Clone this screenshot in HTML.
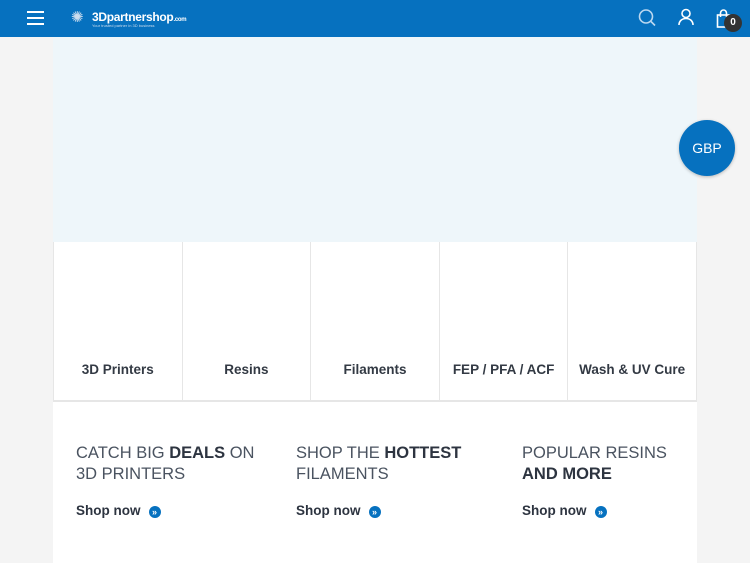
<!DOCTYPE html><html><head><style>
body{margin:0;width:750px;height:563px;background:#f4f4f4;font-family:"Liberation Sans",sans-serif;position:relative;overflow:hidden}
.hdr{position:absolute;left:0;top:0;width:750px;height:37px;background:#0671bf}
.hero{position:absolute;left:53px;top:37px;width:644px;height:205px;background:#eef6fa}
.cats{position:absolute;left:53px;top:242px;width:644px;height:160px;background:#fff;display:flex;border-bottom:2px solid #e6e6e6;box-sizing:border-box}
.cat{flex:1;border-left:1px solid #e6e6e6;text-align:center;padding-top:120px;font-weight:bold;font-size:13.5px;color:#333a44;box-sizing:border-box}
.promo{position:absolute;left:53px;top:402px;width:644px;height:161px;background:#fff}
.p{position:absolute;top:41px;font-size:16.5px;line-height:21px;color:#4a5360;white-space:nowrap}
.p b{color:#2d3440}
.s{position:absolute;top:101px;font-weight:bold;font-size:13.5px;color:#2d3440}
.s i{display:inline-block;width:12px;height:12px;border-radius:50%;background:#0671bf;color:#fff;font-style:normal;font-size:9px;line-height:12px;text-align:center;margin-left:8px;vertical-align:0}
.gbp{position:absolute;left:679px;top:120px;width:56px;height:56px;border-radius:50%;background:#0671bf;color:#fff;font-size:14px;text-align:center;line-height:57px;box-shadow:0 1px 3px rgba(0,0,0,.25)}
</style></head><body>
<div class="hdr">
<div style="position:absolute;left:27px;top:11px;width:17px;height:2px;background:#fff;box-shadow:0 6px 0 #fff,0 12px 0 #fff"></div>
<div style="position:absolute;left:71px;top:11px;width:14px;height:14px;color:#cde;font-size:15px;line-height:14px">✺</div>
<div style="position:absolute;left:92px;top:10px;color:#fff;font-weight:bold;font-size:12px;letter-spacing:-.3px">3Dpartnershop<span style="font-size:6px">.com</span></div>
<div style="position:absolute;left:92px;top:23px;color:#cde;font-size:4px">Your trusted partner in 3D business</div>
<svg style="position:absolute;left:637px;top:8px" width="20" height="20" fill="none" stroke="#bcd8f0" stroke-width="1.6"><circle cx="9" cy="8.5" r="6.5"/><path d="M14 13.5l4 4"/></svg>
<svg style="position:absolute;left:677px;top:8px" width="18" height="18" fill="none" stroke="#fff" stroke-width="1.6"><circle cx="9" cy="5.5" r="4"/><path d="M2 17c0-4 3-6.5 7-6.5s7 2.5 7 6.5"/></svg>
<svg style="position:absolute;left:716px;top:9px" width="16" height="20" fill="none" stroke="#fff" stroke-width="1.6"><rect x="1.5" y="6" width="12" height="12"/><path d="M4.5 8V4a3 3 0 016 0v4"/></svg>
<div style="position:absolute;left:724px;top:14px;width:18px;height:18px;border-radius:50%;background:#333;color:#fff;font-size:10px;font-weight:bold;text-align:center;line-height:18px">0</div>
</div>
<div class="hero"></div>
<div class="gbp">GBP</div>
<div class="cats"><div class="cat">3D Printers</div><div class="cat">Resins</div><div class="cat">Filaments</div><div class="cat">FEP / PFA / ACF</div><div class="cat" style="border-right:1px solid #e6e6e6">Wash &amp; UV Cure</div></div>
<div class="promo">
<div class="p" style="left:23px">CATCH BIG <b>DEALS</b> ON<br>3D PRINTERS</div>
<div class="p" style="left:243px">SHOP THE <b>HOTTEST</b><br>FILAMENTS</div>
<div class="p" style="left:469px">POPULAR RESINS<br><b>AND MORE</b></div>
<div class="s" style="left:23px">Shop now<i>»</i></div>
<div class="s" style="left:243px">Shop now<i>»</i></div>
<div class="s" style="left:469px">Shop now<i>»</i></div>
</div>
</body></html>
